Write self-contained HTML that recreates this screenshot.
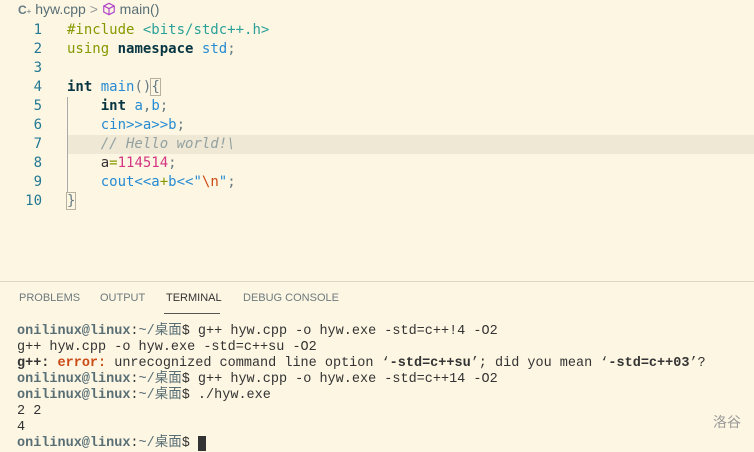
<!DOCTYPE html>
<html><head><meta charset="utf-8"><style>
body{margin:0;width:754px;height:441px;overflow:hidden;background:#fdf6e3;position:relative;font-family:"Liberation Sans",sans-serif}
.bc{position:absolute;top:1px;left:18px;font-size:14px;color:#586e75;white-space:nowrap}
.code{position:absolute;top:21px;left:0;font-family:"DejaVu Sans Mono",monospace;font-size:14px;line-height:19px}
.ln{position:absolute;width:42px;text-align:right;color:#237893}
.tx{position:absolute;left:67px;white-space:pre;color:#657b83}
.hl{position:absolute;left:68px;top:135px;width:686px;height:19px;background:#eee8d5}
.k{color:#859900}.s{color:#2aa198}.b{color:#268bd2}.d{color:#073642;font-weight:bold}.c{color:#93a1a1;font-style:italic}.n{color:#d33682}.o{color:#cb4b16}
.guide{position:absolute;left:67px;top:97px;width:1px;height:95px;background:#aaa}
.br{outline:1px solid #b5b0a0}
.panel{position:absolute;top:281px;left:0;width:754px;height:1px;background:#ddd6c1}
.tab{position:absolute;top:292px;font-size:11px;color:#6c7a7e}
.term{position:absolute;top:324px;left:17px;font-family:"Liberation Mono","Noto Sans CJK SC",monospace;font-size:13.5px;line-height:16px;white-space:pre;color:#333}
.p{color:#586e75;font-weight:bold}
</style></head><body>
<div class="bc"><span style="color:#657b83;font-weight:bold;font-size:12px">C</span><span style="font-size:8px;color:#657b83">+</span> hyw.cpp <span style="color:#999">&gt;</span> <svg width="14" height="14" viewBox="0 0 16 16" style="vertical-align:-2px"><path d="M8 1.5L14 4.5V11.5L8 14.5L2 11.5V4.5Z M2 4.5L8 7.5L14 4.5 M8 7.5V14.5" fill="none" stroke="#b042c8" stroke-width="1.3"/></svg> main()</div>
<div class="hl"></div>
<div class="guide"></div>
<div class="code">
<div class="ln" style="top:0">1</div><div class="tx" style="top:0"><span class="k">#include</span> <span class="s">&lt;bits/stdc++.h&gt;</span></div>
<div class="ln" style="top:19px">2</div><div class="tx" style="top:19px"><span class="k">using</span> <span class="d">namespace</span> <span class="b">std</span>;</div>
<div class="ln" style="top:38px">3</div>
<div class="ln" style="top:57px">4</div><div class="tx" style="top:57px"><span class="d">int</span> <span class="b">main</span>()<span class="br">{</span></div>
<div class="ln" style="top:76px">5</div><div class="tx" style="top:76px">    <span class="d">int</span> <span class="b">a</span>,<span class="b">b</span>;</div>
<div class="ln" style="top:95px">6</div><div class="tx" style="top:95px">    <span class="b">cin&gt;&gt;a&gt;&gt;b</span>;</div>
<div class="ln" style="top:114px">7</div><div class="tx" style="top:114px">    <span class="c">// Hello world!\</span></div>
<div class="ln" style="top:133px">8</div><div class="tx" style="top:133px">    <span style="color:#333">a</span><span class="k">=</span><span class="n">114514</span>;</div>
<div class="ln" style="top:152px">9</div><div class="tx" style="top:152px">    <span class="b">cout&lt;&lt;a</span><span class="k">+</span><span class="b">b&lt;&lt;"</span><span class="o">\n</span><span class="b">"</span>;</div>
<div class="ln" style="top:171px">10</div><div class="tx" style="top:171px"><span class="br">}</span></div>
</div>
<div class="panel"></div>
<div class="tab" style="left:19px">PROBLEMS</div>
<div class="tab" style="left:100px">OUTPUT</div>
<div class="tab" style="left:166px;color:#333">TERMINAL</div>
<div style="position:absolute;left:164px;top:313px;width:56px;height:1px;background:#555"></div>
<div class="tab" style="left:243px">DEBUG CONSOLE</div>
<div class="term"><span class="p">onilinux@linux</span>:<span class="p" style="font-weight:normal">~/桌面</span>$ g++ hyw.cpp -o hyw.exe -std=c++!4 -O2
g++ hyw.cpp -o hyw.exe -std=c++su -O2
<b>g++:</b> <b style="color:#cb4b16">error:</b> unrecognized command line option ‘<b>-std=c++su</b>’; did you mean ‘<b>-std=c++03</b>’?
<span class="p">onilinux@linux</span>:<span class="p" style="font-weight:normal">~/桌面</span>$ g++ hyw.cpp -o hyw.exe -std=c++14 -O2
<span class="p">onilinux@linux</span>:<span class="p" style="font-weight:normal">~/桌面</span>$ ./hyw.exe
2 2
4
<span class="p">onilinux@linux</span>:<span class="p" style="font-weight:normal">~/桌面</span>$ <span style="background:#333"> </span></div>
<div style="position:absolute;left:713px;top:412px;font-size:14px;color:#999;font-family:'Noto Sans CJK SC',sans-serif">洛谷</div>
</body></html>
